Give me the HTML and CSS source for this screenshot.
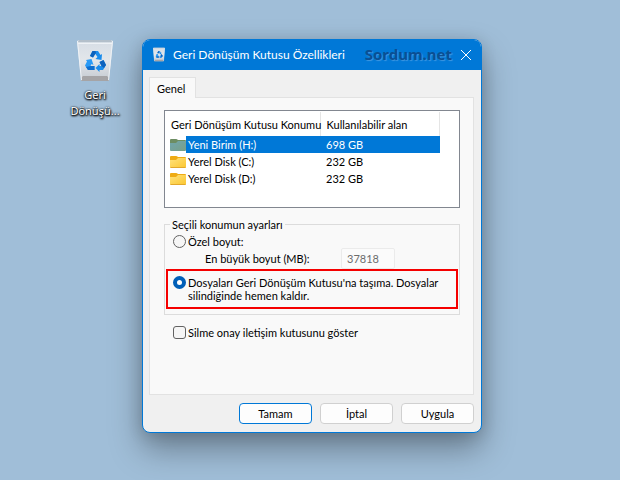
FILE: index.html
```
<!DOCTYPE html>
<html lang="tr">
<head>
  <meta charset="UTF-8" />
  <meta name="viewport" content="width=device-width, initial-scale=1.0"/>
  <title>Geri Dönüşüm Kutusu Özellikleri</title>
  <link rel="stylesheet" href="styles.css">
</head>
<body>

<!-- Shared icons -->
<svg class="defs" width="0" height="0" aria-hidden="true">
  <defs>
    <linearGradient id="binBody" x1="0" y1="0" x2="0" y2="1">
      <stop offset="0" stop-color="#d5dde5"/><stop offset="0.5" stop-color="#e3e6ea"/><stop offset="1" stop-color="#c4c9d0"/>
    </linearGradient>
    <linearGradient id="folderFill" x1="0" y1="0" x2="1" y2="1">
      <stop offset="0" stop-color="#ffe27c"/><stop offset="1" stop-color="#fbc62f"/>
    </linearGradient>
    <linearGradient id="folderSelected" x1="0" y1="0" x2="1" y2="1">
      <stop offset="0" stop-color="#70a6ae"/><stop offset="1" stop-color="#7a9f86"/>
    </linearGradient>
    <symbol id="bin" viewBox="0 0 36 43">
      <path d="M0 2 L2 1 H34 L36 2 L32 42 L4 42 Z" fill="url(#binBody)"/>
      <path d="M4 39 L6 37 H30 L32 39 L31.600 42 H4.400 Z" fill="#a5a4a6"/>
      <path d="M0.500 2 L4.500 41 M35.500 2 L31.500 41 M1 4.500 H35" stroke="#eef2f6" fill="none"/>
      <path d="M2 1 H34 L35 3 H1 Z" fill="#b3bfca"/>
      <path d="M13 17 L15.500 12 H21 L23.500 16 L25 15 L24.500 21 L18.500 20 L20.500 18 L18 14.500 L16 18.500 Z" fill="#1a8cec"/>
      <path d="M13 17 L15.500 12 H18.500 L19 14 L16 18.500 Z" fill="#0d62bd"/>
      <path d="M22.500 23 L26.500 21 L29 26 L26 31 H22.500 V33 L18.500 29 L22.500 25 V27 H24.500 Z" fill="#1a8cec"/>
      <path d="M22.500 23 L26.500 21 L29 26 L27 29 L24.500 27 Z" fill="#0d62bd"/>
      <path d="M9 21 L14.500 20 L16.500 26 L14.500 25 L13.500 27 H17.500 V31 H11 L8 26.500 L10 22.500 Z" fill="#2a9af5"/>
      <path d="M13.500 27 H17.500 V31 H11 L9 28 Z" fill="#0d6ed0"/>
    </symbol>
    <symbol id="folder" viewBox="0 0 16 14">
      <path d="M0 2 Q0 1 1 1 H6 Q7 1 8 2 H15 Q16 2 16 3 V12 H0 Z" fill="#efab13"/>
      <path d="M0 5 H6 L8 3 H16 V12 Q16 13 15 13 H1 Q0 13 0 12 Z" fill="url(#folderFill)"/>
      <path d="M0.500 12.500 H15.500" stroke="#e2a82c" fill="none"/>
    </symbol>
    <symbol id="folder-selected" viewBox="0 0 16 14">
      <path d="M0 2 Q0 1 1 1 H6 Q7 1 8 2 H15 Q16 2 16 3 V12 H0 Z" fill="#6d8d62"/>
      <path d="M0 5 H6 L8 3 H16 V12 Q16 13 15 13 H1 Q0 13 0 12 Z" fill="url(#folderSelected)"/>
    </symbol>
  </defs>
</svg>

<main class="desktop">
  <div class="shortcut">
    <svg class="shortcut-icon"><use href="#bin"/></svg>
    <span class="shortcut-name">Geri<br>Dönüşü...</span>
  </div>

  <section class="dialog">
    <header class="titlebar">
      <svg class="titlebar-icon"><use href="#bin"/></svg>
      <h1 class="title">Geri Dönüşüm Kutusu Özellikleri</h1>
      <span class="brand">Sordum.net</span>
      <button class="close" type="button" aria-label="Kapat">
        <svg width="12" height="12" viewBox="0 0 12 12"><path d="M1 1 L11 11 M11 1 L1 11" stroke="#fff" fill="none"/></svg>
      </button>
    </header>

    <form class="content">
      <div class="tabs">
        <button class="tab" type="button">Genel</button>
      </div>

      <div class="pane">
        <div class="list">
          <table class="drives">
            <colgroup><col class="col-icon"><col class="col-name"><col class="col-space"></colgroup>
            <thead>
              <tr><th colspan="2">Geri Dönüşüm Kutusu Konumu</th><th>Kullanılabilir alan</th></tr>
            </thead>
            <tbody>
              <tr class="selected">
                <td><svg class="folder"><use href="#folder-selected"/></svg></td>
                <td class="name">Yeni Birim (H:)</td>
                <td class="space">698 GB</td>
              </tr>
              <tr>
                <td><svg class="folder"><use href="#folder"/></svg></td>
                <td class="name">Yerel Disk (C:)</td>
                <td class="space">232 GB</td>
              </tr>
              <tr>
                <td><svg class="folder"><use href="#folder"/></svg></td>
                <td class="name">Yerel Disk (D:)</td>
                <td class="space">232 GB</td>
              </tr>
            </tbody>
          </table>
        </div>

        <fieldset class="settings">
          <legend>Seçili konumun ayarları</legend>
          <div class="option">
            <input class="radio" type="radio" name="mode" id="custom">
            <label for="custom">Özel boyut:</label>
          </div>
          <div class="size">
            <label class="size-label" for="maxSize">En büyük boyut (MB):</label>
            <input class="size-input" type="text" id="maxSize" value="37818" disabled>
          </div>
          <div class="option highlight">
            <input class="radio" type="radio" name="mode" id="remove" checked>
            <label for="remove">Dosyaları Geri Dönüşüm Kutusu'na taşıma. Dosyalar silindiğinde hemen kaldır.</label>
          </div>
        </fieldset>

        <div class="option confirm">
          <input class="checkbox" type="checkbox" id="confirm">
          <label for="confirm">Silme onay iletişim kutusunu göster</label>
        </div>
      </div>

      <div class="buttons">
        <button class="btn btn-default" type="button">Tamam</button>
        <button class="btn" type="button">İptal</button>
        <button class="btn" type="button">Uygula</button>
      </div>
    </form>
  </section>
</main>

</body>
</html>
```
FILE: styles.css
```
* { box-sizing: border-box; }
body {
  margin: 0;
  min-height: 100vh;
  background: #a0bed8;
  font-family: Lato, sans-serif;
  font-size: 11px;
  line-height: 13px;
  color: #000;
}
.defs { position: absolute; }
button, input { font: inherit; color: inherit; margin: 0; }

.desktop {
  display: flex;
  align-items: flex-start;
  gap: 17px;
  padding: 39px 16px 39px 65px;
}
.shortcut {
  flex: 0 0 60px;
  display: flex;
  flex-direction: column;
  align-items: center;
  gap: 5px;
}
.shortcut-icon { width: 36px; height: 43px; }
.shortcut-name {
  color: #fff;
  font-family: "Noto Sans", sans-serif;
  line-height: 16px;
  text-align: center;
  text-shadow: 0 1px 2px #000, 0 0 2px #000, 1px 1px 2px #000;
}

.dialog {
  flex: 1;
  max-width: 340px;
  border: 1px solid #0078d7;
  border-radius: 8px;
  background: #f0f0f0;
  overflow: hidden;
  box-shadow: 0 16px 32px rgba(0,0,0,0.34), 0 2px 16px rgba(0,0,0,0.14);
}
.titlebar {
  display: flex;
  align-items: center;
  height: 30px;
  padding: 0 8px 1px 10px;
  background: #0078d7;
  color: #fff;
}
.titlebar-icon { width: 12px; height: 15px; }
.title {
  margin: 0 auto 0 8px;
  font-size: 12px;
  font-weight: 400;
  white-space: nowrap;
}
.brand {
  color: #0a4f93;
  font-family: "Noto Sans", sans-serif;
  font-size: 15px;
  font-weight: 700;
  text-shadow: 1px 1px 1px #3f97e0;
}
.close {
  display: flex;
  margin-left: 7px;
  padding: 1px;
  border: none;
  background: none;
}

.content { padding: 7px 7px 8px 6px; }
.tabs { display: flex; }
.tab {
  height: 21px;
  margin-bottom: -1px;
  padding: 0 10px 0 7px;
  border: 1px solid #e2e2e2;
  border-bottom: none;
  background: #f9f9f9;
  position: relative;
}
.pane {
  min-height: 298px;
  padding: 12px 13px 16px 14px;
  border: 1px solid #e2e2e2;
  background: #f9f9f9;
}

.list {
  height: 98px;
  padding-top: 1px;
  border: 1px solid #828790;
  background: #fff;
}
.drives {
  width: 275px;
  border-collapse: collapse;
  table-layout: fixed;
}
.col-icon { width: 21px; }
.col-name { width: 134px; }
.drives th {
  height: 24px;
  padding: 0 0 0 6px;
  border-right: 1px solid #e5e5e5;
  font-weight: 400;
  text-align: left;
  white-space: nowrap;
}
.drives td { height: 17px; padding: 0; }
.drives .name { padding-left: 2px; }
.drives .space { padding-left: 6px; }
.folder { display: block; width: 16px; height: 14px; margin-left: 5px; }
.selected .name, .selected .space { background: #0078d7; color: #fff; }

.settings {
  margin: 10px 0 0;
  padding: 4px 1px 5px;
  border: 1px solid #dcdcdc;
}
.settings legend { margin-left: 4px; padding: 0 2px; }
.option { display: flex; gap: 2px; padding-left: 7px; }
.radio {
  appearance: none;
  flex: none;
  width: 13px;
  height: 13px;
  border: 1px solid #626262;
  border-radius: 50%;
  background: #f6f6f6;
}
.radio:checked { border: 4px solid #005fb8; background: #fff; }
.size {
  display: flex;
  align-items: center;
  padding-left: 39px;
}
.size-label { width: 136px; }
.size-input {
  width: 54px;
  height: 21px;
  padding: 0 5px;
  border: 1px solid #ebebeb;
  border-radius: 2px;
  background: #fbfbfb;
  color: #6d6d6d;
}
.highlight {
  padding: 5px 0 5px 5px;
  border: 2px solid #f50000;
}
.confirm { padding-left: 9px; margin-top: 11px; }
.checkbox {
  appearance: none;
  width: 13px;
  height: 13px;
  border: 1px solid #626262;
  border-radius: 3px;
  background: #f6f6f6;
}

.buttons {
  display: flex;
  justify-content: flex-end;
  gap: 8px;
  padding-top: 8px;
}
.btn {
  width: 73px;
  height: 21px;
  padding: 0;
  border: 1px solid #d0d0d0;
  border-radius: 4px;
  background: #fdfdfd;
}
.btn-default { border-color: #0078d7; }
```
